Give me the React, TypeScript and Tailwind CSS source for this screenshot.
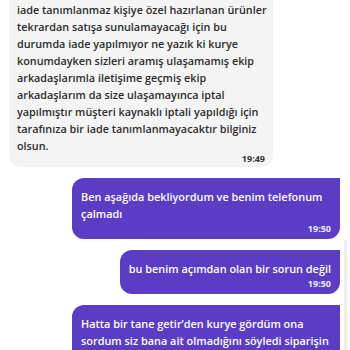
const font = { fontFamily: '"Open Sans", "Noto Sans", sans-serif' };

type Msg = { text: string; time: string };

const sent: Msg[] = [
  { text: "Ben aşağıda bekliyordum ve benim telefonum çalmadı", time: "19:50" },
  { text: "bu benim açımdan olan bir sorun değil", time: "19:50" },
  {
    text: "Hatta bir tane getir’den kurye gördüm ona sordum siz bana ait olmadığını söyledi siparişin",
    time: "19:51",
  },
];

const SentBubble = ({ msg }: { msg: Msg }) => (
  <div className="flex justify-end">
    <div className="max-w-[268px] rounded-[12px] rounded-tr-none bg-[#5b3cc4] px-[9px] pt-[10px] pb-[4px] text-white">
      <p className="text-[10.9px] leading-[17px] font-semibold">{msg.text}</p>
      <p className="text-right text-[9px] leading-[13px] font-bold text-white/90">
        {msg.time}
      </p>
    </div>
  </div>
);

const App = () => {
  return (
    <div
      className="relative h-[350px] w-[350px] overflow-hidden bg-white"
      style={font}
    >
      <div className="flex flex-col gap-[11px] pr-[10px] pl-[9px]">
        <div className="flex justify-start">
          <div className="-mt-[10px] w-[264px] rounded-b-[12px] bg-[#f4f4f4] pt-[11px] pr-[4px] pb-[2px] pl-[8px] text-[#2b2b2b]">
            <p className="text-[10.8px] leading-[17px] font-semibold">
              iade tanımlanmaz kişiye özel hazırlanan ürünler tekrardan satışa
              sunulamayacağı için bu durumda iade yapılmıyor ne yazık ki kurye
              konumdayken sizleri aramış ulaşamamış ekip arkadaşlarımla
              iletişime geçmiş ekip arkadaşlarım da size ulaşamayınca iptal
              yapılmıştır müşteri kaynaklı iptali yapıldığı için tarafınıza bir
              iade tanımlanmayacaktır bilginiz olsun.
            </p>
            <p className="-mt-[2px] pr-[4px] text-right text-[9px] leading-[13px] font-bold text-[#333]">
              19:49
            </p>
          </div>
        </div>
        {sent.map((m, i) => (
          <SentBubble key={i} msg={m} />
        ))}
      </div>
      <div className="absolute top-[240px] right-[3px] bottom-0 w-[3px] rounded-t-full bg-[#ececec]" />
    </div>
  );
};

export default App;
